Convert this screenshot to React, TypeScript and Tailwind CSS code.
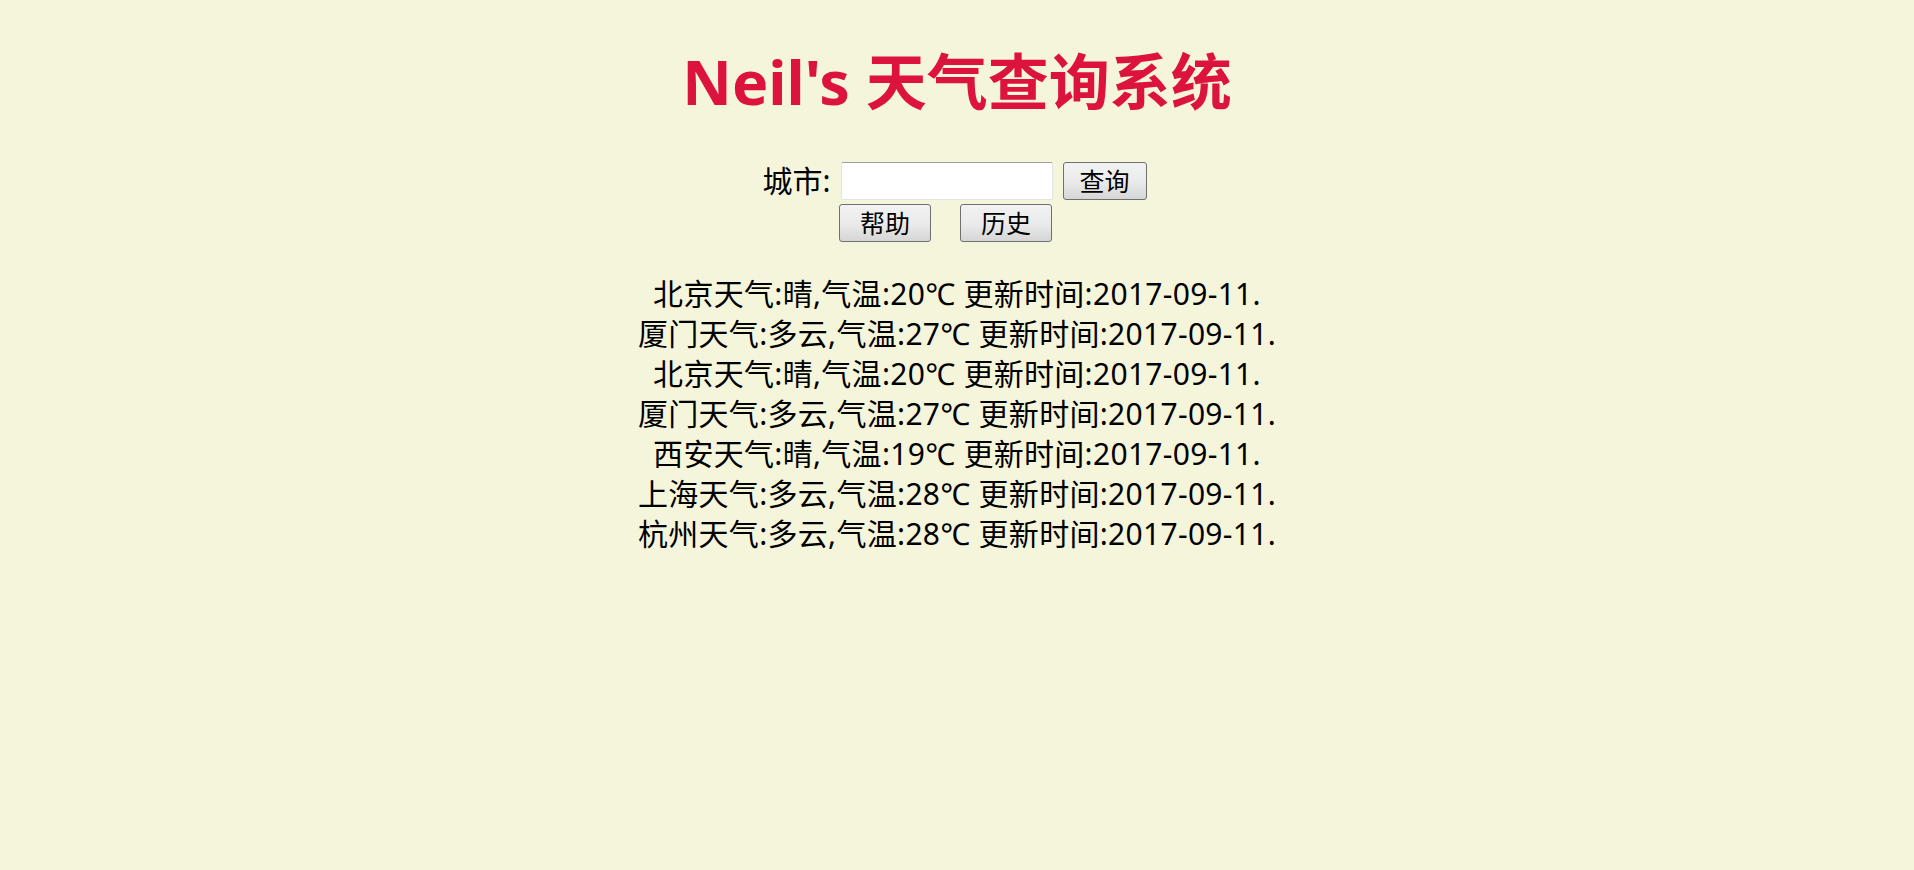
import React, { useState } from 'react';

const records = [
  { city: '北京', weather: '晴', temp: 20 },
  { city: '厦门', weather: '多云', temp: 27 },
  { city: '北京', weather: '晴', temp: 20 },
  { city: '厦门', weather: '多云', temp: 27 },
  { city: '西安', weather: '晴', temp: 19 },
  { city: '上海', weather: '多云', temp: 28 },
  { city: '杭州', weather: '多云', temp: 28 },
];

const btn =
  'h-[38px] rounded-[3px] border border-[#707070] bg-gradient-to-b from-[#f2f2f2] via-[#ebebeb] to-[#d6d6d6] text-[25px] leading-none text-black';

const App: React.FC = () => {
  const [city, setCity] = useState('');

  return (
    <div
      className="min-h-[870px] bg-[#f5f5dc] pt-[42px] text-center text-black"
      style={{ fontFamily: '"Noto Sans", "Noto Sans CJK SC", sans-serif' }}
    >
      <h1 className="text-[61px] font-bold leading-[80px] text-[#dc143c]">
        Neil's 天气查询系统
      </h1>

      {/* 查询表单 */}
      <div className="mt-[40px] flex items-center justify-center gap-[10px] pr-[5px]">
        <label className="text-[30px] leading-[38px]">城市:</label>
        <input
          value={city}
          onChange={(e) => setCity(e.target.value)}
          className="h-[38px] w-[212px] rounded-[2px] border border-[#e3e3e3] border-t-[#a0a0a0] bg-white px-1 text-[25px] outline-none"
        />
        <button className={`${btn} w-[84px]`}>查询</button>
      </div>
      <div className="mt-[4px] flex justify-center gap-[29px] pr-[23px]">
        <button className={`${btn} w-[92px]`}>帮助</button>
        <button className={`${btn} w-[92px]`}>历史</button>
      </div>

      <div className="mt-[32px] text-[30px] leading-[40px] tracking-[0.3px]">
        {records.map((r, i) => (
          <div key={i}>
            {r.city}天气:{r.weather},气温:{r.temp}℃ 更新时间:2017-09-11.
          </div>
        ))}
      </div>
    </div>
  );
};

export default App;
